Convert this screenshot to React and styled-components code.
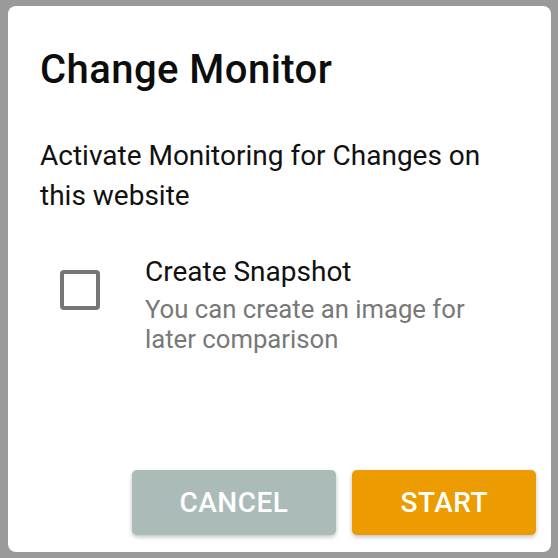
import React, { useState } from "react";
import styled, { createGlobalStyle } from "styled-components";

const GlobalStyle = createGlobalStyle`
  html, body {
    margin: 0;
    padding: 0;
    background: #9a9a9a;
    font-family: Roboto, "Liberation Sans", Arial, sans-serif;
  }
  * {
    box-sizing: border-box;
  }
`;

export default function App() {
  const [snapshot, setSnapshot] = useState(false);

  return (
    <>
      <GlobalStyle />
      <Backdrop>
        <Dialog role="dialog" aria-labelledby="dlg-title">
          <Title id="dlg-title">Change Monitor</Title>
          <Content>
            <Description>Activate Monitoring for Changes on this website</Description>
            <OptionRow onClick={() => setSnapshot((v) => !v)}>
              <CheckBox $checked={snapshot} aria-checked={snapshot} role="checkbox" />
              <OptionText>
                <OptionLabel>Create Snapshot</OptionLabel>
                <OptionHint>You can create an image for later comparison</OptionHint>
              </OptionText>
            </OptionRow>
          </Content>
          <Actions>
            <ActionButton type="button" $variant="cancel">
              Cancel
            </ActionButton>
            <ActionButton type="button" $variant="start">
              Start
            </ActionButton>
          </Actions>
        </Dialog>
      </Backdrop>
    </>
  );
}

const Backdrop = styled.div`
  width: 558px;
  height: 558px;
  padding: 6px 7px 6px 8px;
`;

const Dialog = styled.div`
  width: 543px;
  height: 546px;
  background: #fff;
  border-radius: 8px;
  display: flex;
  flex-direction: column;
  padding-top: 40px;
`;

const Title = styled.h2`
  margin: 0;
  padding: 0 32px;
  font-size: 40px;
  line-height: 48px;
  font-weight: 500;
  letter-spacing: 0.45px;
  color: #0d0d0d;
`;

const Content = styled.div`
  padding: 42px 32px 0;
  display: flex;
  flex-direction: column;
`;

const Description = styled.p`
  margin: 0;
  font-size: 28px;
  line-height: 40px;
  font-weight: 400;
  color: #111;
`;

const OptionRow = styled.div`
  display: flex;
  align-items: flex-start;
  gap: 45px;
  margin-top: 36px;
  padding-left: 20px;
  cursor: pointer;
`;

const CheckBox = styled.span`
  flex: none;
  width: 40px;
  height: 40px;
  margin-top: 18px;
  border: 4px solid #767676;
  border-radius: 4px;
  background: ${(p) => (p.$checked ? "#767676" : "transparent")};
`;

const OptionText = styled.div`
  display: flex;
  flex-direction: column;
  gap: 2px;
  width: 350px;
`;

const OptionLabel = styled.span`
  font-size: 28px;
  line-height: 40px;
  color: #111;
`;

const OptionHint = styled.span`
  font-size: 25.7px;
  line-height: 30px;
  color: #787878;
`;

const Actions = styled.div`
  margin-top: auto;
  display: flex;
  justify-content: flex-end;
  gap: 16px;
  padding: 0 15px 17px;
`;

const ActionButton = styled.button`
  height: 65px;
  padding: 0 48px;
  border: none;
  border-radius: 5px;
  background: ${(p) => (p.$variant === "start" ? "#ec9b00" : "#abbbb8")};
  color: #fff;
  font-family: Roboto, "Liberation Sans", Arial, sans-serif;
  font-size: 28px;
  font-weight: 500;
  letter-spacing: 0.5px;
  text-transform: uppercase;
  box-shadow: 0 2px 4px rgba(0, 0, 0, 0.25);
  cursor: pointer;
`;
